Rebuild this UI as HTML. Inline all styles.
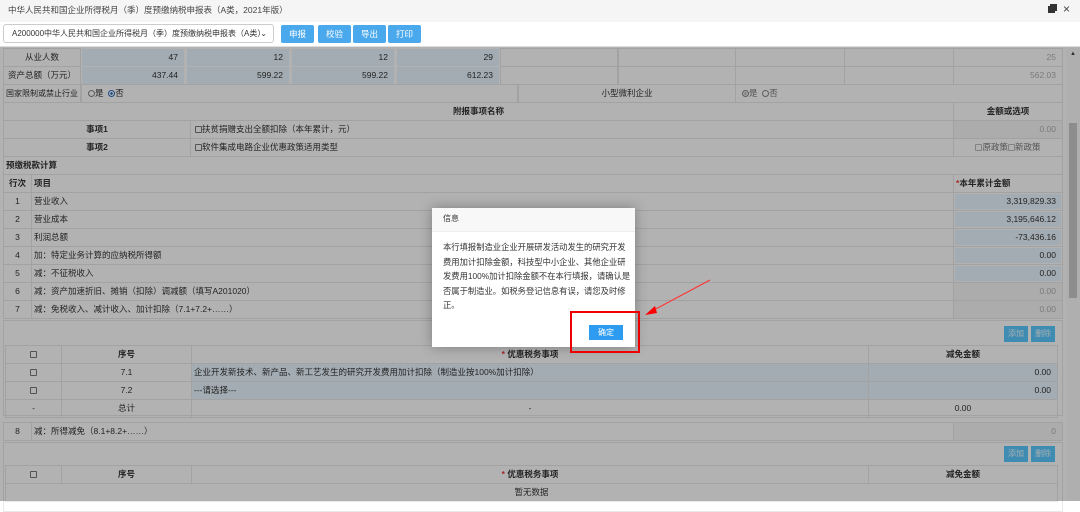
<!DOCTYPE html>
<html><head><meta charset="utf-8"><style>
*{margin:0;padding:0;box-sizing:border-box}
body{width:1080px;height:501px;overflow:hidden;background:#fff;font-family:"Liberation Sans","Noto Sans CJK SC",sans-serif;font-size:8.5px;color:#333;position:relative}
.a{position:absolute}
.c{position:absolute;border:1px solid #e9e9e9;line-height:17px;white-space:nowrap;overflow:hidden}
.ctr{text-align:center}.r{text-align:right;padding-right:6px}.l{padding-left:6px}
.blue{background:#e9f6ff}
.b{font-weight:bold}
.btn{position:absolute;background:#5ac9ff;line-height:16px;text-align:center;font-size:8px;color:#f0faff}
.cb{display:inline-block;width:7px;height:7px;border:1px solid #777;border-radius:1px;vertical-align:-1px}
.rd{display:inline-block;width:7px;height:7px;border:1px solid #888;border-radius:50%;vertical-align:-1px}
.g{color:#b0b0b0}
</style></head><body>
<!-- title -->
<div class="a" style="left:0;top:0;width:1080px;height:22px;background:#f5f5f5;line-height:20px;padding-left:8px;font-size:8.5px;color:#444">中华人民共和国企业所得税月（季）度预缴纳税申报表（A类，2021年版）</div>
<div class="a" style="left:1048px;top:6px;width:7px;height:7px;background:#333"></div>
<div class="a" style="left:1050px;top:4px;width:7px;height:7px;border-top:2px solid #333;border-right:2px solid #333"></div>
<div class="a" style="left:1063px;top:2px;font-size:12px;color:#444">×</div>
<!-- toolbar -->
<div class="a" style="left:0;top:22px;width:1080px;height:25px;background:#fff;border-bottom:1px solid #ddd"></div>
<div class="a" style="left:3px;top:24px;width:271px;height:19px;border:1px solid #ccc;border-radius:3px;background:#fff;line-height:17px;padding-left:8px;font-size:8px;color:#333;white-space:nowrap;overflow:hidden">A200000中华人民共和国企业所得税月（季）度预缴纳税申报表（A类）<span style="position:absolute;right:6px;top:0;font-size:8px;background:#fff">⌄</span></div>
<div class="a" style="left:281px;top:25px;width:33px;height:18px;background:#4aa8ec;color:#fff;line-height:18px;text-align:center;border-radius:2px">申报</div>
<div class="a" style="left:318px;top:25px;width:33px;height:18px;background:#4aa8ec;color:#fff;line-height:18px;text-align:center;border-radius:2px">校验</div>
<div class="a" style="left:353px;top:25px;width:33px;height:18px;background:#4aa8ec;color:#fff;line-height:18px;text-align:center;border-radius:2px">导出</div>
<div class="a" style="left:388px;top:25px;width:33px;height:18px;background:#4aa8ec;color:#fff;line-height:18px;text-align:center;border-radius:2px">打印</div>
<!-- scrollbar -->
<div class="a" style="left:1066px;top:48px;width:14px;height:453px;background:#fbfbfb"></div>
<div class="a" style="left:1069px;top:123px;width:8px;height:175px;background:#cbcbcb"></div>
<div class="a" style="left:1070px;top:51px;font-size:6px;color:#444">▲</div>

<div class="c ctr" style="left:3px;top:48px;width:78px;height:19px">从业人数</div>
<div class="c r blue" style="left:81px;top:48px;width:104px;height:19px;border-color:#fff">47</div>
<div class="c r blue" style="left:186px;top:48px;width:104px;height:19px;border-color:#fff">12</div>
<div class="c r blue" style="left:291px;top:48px;width:104px;height:19px;border-color:#fff">12</div>
<div class="c r blue" style="left:396px;top:48px;width:104px;height:19px;border-color:#fff">29</div>
<div class="c" style="left:500px;top:48px;width:118px;height:19px"></div>
<div class="c" style="left:618px;top:48px;width:118px;height:19px"></div>
<div class="c" style="left:735px;top:48px;width:110px;height:19px"></div>
<div class="c" style="left:844px;top:48px;width:110px;height:19px"></div>
<div class="c r g" style="left:953px;top:48px;width:110px;height:19px">25</div>

<div class="c ctr" style="left:3px;top:66px;width:78px;height:19px">资产总额（万元）</div>
<div class="c r blue" style="left:81px;top:66px;width:104px;height:19px;border-color:#fff">437.44</div>
<div class="c r blue" style="left:186px;top:66px;width:104px;height:19px;border-color:#fff">599.22</div>
<div class="c r blue" style="left:291px;top:66px;width:104px;height:19px;border-color:#fff">599.22</div>
<div class="c r blue" style="left:396px;top:66px;width:104px;height:19px;border-color:#fff">612.23</div>
<div class="c" style="left:500px;top:66px;width:118px;height:19px"></div>
<div class="c" style="left:618px;top:66px;width:118px;height:19px"></div>
<div class="c" style="left:735px;top:66px;width:110px;height:19px"></div>
<div class="c" style="left:844px;top:66px;width:110px;height:19px"></div>
<div class="c r g" style="left:953px;top:66px;width:110px;height:19px">562.03</div>

<div class="c ctr" style="left:3px;top:84px;width:78px;height:19px;font-size:8px">国家限制或禁止行业</div>
<div class="c l" style="left:81px;top:84px;width:437px;height:19px"><span class="rd"></span>是 &nbsp;<span class="rd" style="border-color:#2a6fc0;background:radial-gradient(#2a6fc0 35%,#fff 40%)"></span>否</div>
<div class="c ctr" style="left:518px;top:84px;width:218px;height:19px">小型微利企业</div>
<div class="c l" style="left:735px;top:84px;width:328px;height:19px;color:#777"><span class="rd" style="background:radial-gradient(#bbb 35%,#eee 40%)"></span>是 &nbsp;<span class="rd"></span>否</div>

<div class="c ctr b" style="left:3px;top:102px;width:951px;height:19px">附报事项名称</div>
<div class="c ctr b" style="left:953px;top:102px;width:110px;height:19px">金额或选项</div>
<div class="c ctr b" style="left:3px;top:120px;width:188px;height:19px">事项1</div>
<div class="c" style="left:190px;top:120px;width:764px;height:19px;padding-left:4px"><span class="cb"></span>扶贫捐赠支出全额扣除（本年累计，元）</div>
<div class="c r g" style="left:953px;top:120px;width:110px;height:19px;background:#f7f7f7">0.00</div>
<div class="c ctr b" style="left:3px;top:138px;width:188px;height:19px">事项2</div>
<div class="c" style="left:190px;top:138px;width:764px;height:19px;padding-left:4px"><span class="cb"></span>软件集成电路企业优惠政策适用类型</div>
<div class="c ctr" style="left:953px;top:138px;width:110px;height:19px;color:#777"><span class="cb" style="border-color:#bbb"></span>原政策<span class="cb" style="border-color:#bbb"></span>新政策</div>
<div class="c b" style="left:3px;top:156px;width:1060px;height:19px;padding-left:2px">预缴税款计算</div>
<div class="c ctr b" style="left:3px;top:174px;width:29px;height:19px">行次</div>
<div class="c b" style="left:31px;top:174px;width:923px;height:19px;padding-left:2px">项目</div>
<div class="c b" style="left:953px;top:174px;width:110px;height:19px;padding-left:2px"><span style="color:#e33">*</span>本年累计金额</div>

<div class="c ctr" style="left:3px;top:192px;width:29px;height:19px">1</div><div class="c" style="left:31px;top:192px;width:923px;height:19px;padding-left:2px">营业收入</div><div class="c r" style="left:953px;top:192px;width:110px;height:19px"><div class="a blue" style="left:1px;top:1px;right:1px;bottom:1px"></div><span style="position:relative">3,319,829.33</span></div>
<div class="c ctr" style="left:3px;top:210px;width:29px;height:19px">2</div><div class="c" style="left:31px;top:210px;width:923px;height:19px;padding-left:2px">营业成本</div><div class="c r" style="left:953px;top:210px;width:110px;height:19px"><div class="a blue" style="left:1px;top:1px;right:1px;bottom:1px"></div><span style="position:relative">3,195,646.12</span></div>
<div class="c ctr" style="left:3px;top:228px;width:29px;height:19px">3</div><div class="c" style="left:31px;top:228px;width:923px;height:19px;padding-left:2px">利润总额</div><div class="c r" style="left:953px;top:228px;width:110px;height:19px"><div class="a blue" style="left:1px;top:1px;right:1px;bottom:1px"></div><span style="position:relative">-73,436.16</span></div>
<div class="c ctr" style="left:3px;top:246px;width:29px;height:19px">4</div><div class="c" style="left:31px;top:246px;width:923px;height:19px;padding-left:2px">加：特定业务计算的应纳税所得额</div><div class="c r" style="left:953px;top:246px;width:110px;height:19px"><div class="a blue" style="left:1px;top:1px;right:1px;bottom:1px"></div><span style="position:relative">0.00</span></div>
<div class="c ctr" style="left:3px;top:264px;width:29px;height:19px">5</div><div class="c" style="left:31px;top:264px;width:923px;height:19px;padding-left:2px">减：不征税收入</div><div class="c r" style="left:953px;top:264px;width:110px;height:19px"><div class="a blue" style="left:1px;top:1px;right:1px;bottom:1px"></div><span style="position:relative">0.00</span></div>
<div class="c ctr" style="left:3px;top:282px;width:29px;height:19px">6</div><div class="c" style="left:31px;top:282px;width:923px;height:19px;padding-left:2px">减：资产加速折旧、摊销（扣除）调减额（填写A201020）</div><div class="c r g" style="left:953px;top:282px;width:110px;height:19px;background:#f7f7f7">0.00</div>
<div class="c ctr" style="left:3px;top:300px;width:29px;height:19px">7</div><div class="c" style="left:31px;top:300px;width:923px;height:19px;padding-left:2px">减：免税收入、减计收入、加计扣除（7.1+7.2+……）</div><div class="c r g" style="left:953px;top:300px;width:110px;height:19px;background:#f7f7f7">0.00</div>

<div class="c" style="left:3px;top:320px;width:1060px;height:96px"></div>
<div class="btn" style="left:1004px;top:326px;width:24px">添加</div>
<div class="btn" style="left:1031px;top:326px;width:24px">删除</div>
<div class="c ctr" style="left:5px;top:345px;width:57px;height:19px"><span class="cb"></span></div>
<div class="c ctr b" style="left:61px;top:345px;width:131px;height:19px">序号</div>
<div class="c ctr b" style="left:191px;top:345px;width:678px;height:19px"><span style="color:#e33">*</span> 优惠税务事项</div>
<div class="c ctr b" style="left:868px;top:345px;width:190px;height:19px">减免金额</div>
<div class="c ctr" style="left:5px;top:363px;width:57px;height:19px"><span class="cb"></span></div>
<div class="c ctr" style="left:61px;top:363px;width:131px;height:19px">7.1</div>
<div class="c blue" style="left:191px;top:363px;width:678px;height:19px;padding-left:2px">企业开发新技术、新产品、新工艺发生的研究开发费用加计扣除（制造业按100%加计扣除）</div>
<div class="c r blue" style="left:868px;top:363px;width:190px;height:19px">0.00</div>
<div class="c ctr" style="left:5px;top:381px;width:57px;height:19px"><span class="cb"></span></div>
<div class="c ctr" style="left:61px;top:381px;width:131px;height:19px">7.2</div>
<div class="c blue" style="left:191px;top:381px;width:678px;height:19px;padding-left:2px">---请选择---</div>
<div class="c r blue" style="left:868px;top:381px;width:190px;height:19px">0.00</div>
<div class="c ctr" style="left:5px;top:399px;width:57px;height:19px">-</div>
<div class="c ctr" style="left:61px;top:399px;width:131px;height:19px">总计</div>
<div class="c ctr" style="left:191px;top:399px;width:678px;height:19px">-</div>
<div class="c ctr" style="left:868px;top:399px;width:190px;height:19px">0.00</div>

<div class="c ctr" style="left:3px;top:422px;width:29px;height:19px">8</div><div class="c" style="left:31px;top:422px;width:923px;height:19px;padding-left:2px">减：所得减免（8.1+8.2+……）</div><div class="c r g" style="left:953px;top:422px;width:110px;height:19px;background:#f7f7f7">0</div>

<div class="c" style="left:3px;top:442px;width:1060px;height:70px"></div>
<div class="btn" style="left:1004px;top:446px;width:24px">添加</div>
<div class="btn" style="left:1031px;top:446px;width:24px">删除</div>
<div class="c ctr" style="left:5px;top:465px;width:57px;height:19px"><span class="cb"></span></div>
<div class="c ctr b" style="left:61px;top:465px;width:131px;height:19px">序号</div>
<div class="c ctr b" style="left:191px;top:465px;width:678px;height:19px"><span style="color:#e33">*</span> 优惠税务事项</div>
<div class="c ctr b" style="left:868px;top:465px;width:190px;height:19px">减免金额</div>
<div class="c ctr" style="left:5px;top:483px;width:1053px;height:19px">暂无数据</div>

<!-- overlay -->
<div class="a" style="left:0;top:47px;width:1080px;height:454px;background:rgba(0,0,0,0.3)"></div>

<!-- dialog -->
<div class="a" style="left:432px;top:208px;width:203px;height:139px;background:#fff;box-shadow:0 0 12px rgba(0,0,0,.3)"></div>
<div class="a" style="left:432px;top:208px;width:203px;height:24px;background:#f8f8f8;border-bottom:1px solid #eee;line-height:22px;padding-left:11px;font-size:8px;color:#333">信息</div>
<div class="a" style="left:443px;top:240px;width:190px;font-size:8.3px;line-height:14.5px;color:#333;white-space:nowrap">本行填报制造业企业开展研发活动发生的研究开发<br>费用加计扣除金额，科技型中小企业、其他企业研<br>发费用100%加计扣除金额不在本行填报，请确认是<br>否属于制造业。如税务登记信息有误，请您及时修<br>正。</div>
<div class="a" style="left:589px;top:325px;width:34px;height:15px;background:#2d9cf0;color:#fff;font-size:8px;line-height:15px;text-align:center">确定</div>
<div class="a" style="left:570px;top:311px;width:70px;height:42px;border:2px solid #e00"></div>
<svg class="a" style="left:0;top:0" width="1080" height="501"><line x1="710" y1="280" x2="652" y2="311" stroke="#f33" stroke-width="1"/><polygon points="645,315 655,306 657,313" fill="#f00"/></svg>
</body></html>
